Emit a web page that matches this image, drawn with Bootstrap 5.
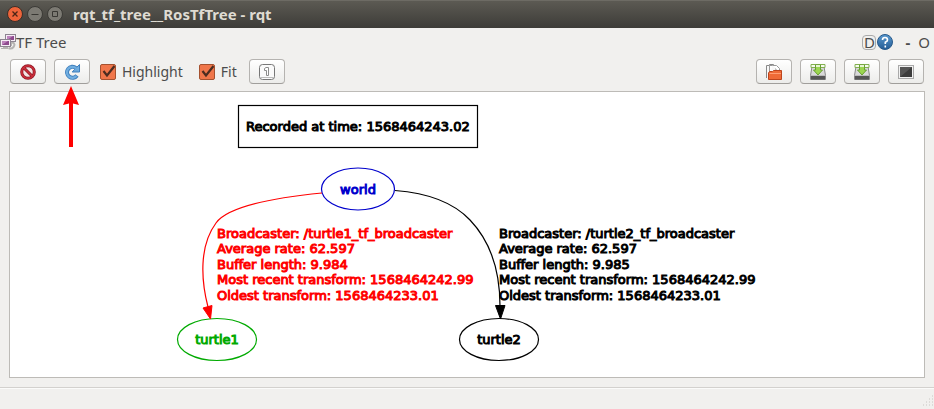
<!DOCTYPE html>
<html lang="en">
<head>
<meta charset="utf-8">
<meta name="viewport" content="width=device-width, initial-scale=1">
<title>rqt_tf_tree__RosTfTree - rqt</title>
<link rel="stylesheet" href="https://cdn.jsdelivr.net/npm/bootstrap@5.3.0/dist/css/bootstrap.min.css">
<style>
body { background: #f1f0ee; color: #4c4c4c; font: 14px/20px "Noto Sans", "Open Sans", sans-serif; }
.title-bar { height: 28px; background: linear-gradient(#5d5b54, #3d3c38); box-shadow: inset 0 1px #6d6b64; padding-left: 7px; }
.title-bar h1 { font-size: 15px; line-height: 20px; color: #dfdbd2; padding-left: 2px; }
.win-btn { width: 16px; height: 16px; }
.win-btn svg, .tool svg, .dock-bar svg { display: block; }
.dock-bar { height: 28px; font-size: 15px; }
.dock-btn { color: #4c4c4c; line-height: 16px; font-size: 15px; }
.dock-d { width: 14px; height: 15px; border: 1px solid #aaa; border-radius: 4px; line-height: 13px; margin-right: 1px; }
.tools { padding: 3px 10px 7px; min-height: 35px; }
.tool { width: 36px; height: 25px; border: 1px solid #b5b3b0; border-bottom-color: #a09e9b; border-radius: 4px; background: linear-gradient(#fff, #ececea); }
.tick { width: 16px; height: 16px; margin: 0 6px 0 0; float: none; }
.tick, .tick:checked { border: 1px solid #a5512f; border-radius: 2px; }
.tick:checked { background: #f0764a url("data:image/svg+xml,%3Csvg xmlns='http://www.w3.org/2000/svg' viewBox='0 0 14 14'%3E%3Cpath d='M2.5 6L6 10.5L13.500 1' fill='none' stroke='%234d2c20' stroke-width='2.2'/%3E%3C/svg%3E") center / 14px 14px no-repeat; }
.first-check { margin-left: 2px; }
.pointer { position: absolute; left: 8px; top: 26px; z-index: 2; pointer-events: none; }
.graph-view { margin: 0 9px; border: 1px solid #bdbbb7; background: #fff; }
.graph-view svg { display: block; max-width: 100%; }
.graph-view text { font: 13px "DejaVu Sans", sans-serif; fill: currentColor; stroke: currentColor; stroke-width: 1px; }
.red { color: #f00; } .blue { color: #00c; } .green { color: #0a0; } .black { color: #000; }
.status { height: 22px; margin-top: 9px; border-top: 1px solid #d3d1ce; box-shadow: inset 0 1px #fbfbfa; }
</style>
<script src="https://cdn.jsdelivr.net/npm/bootstrap@5.3.0/dist/js/bootstrap.bundle.min.js"></script>
</head>
<body class="d-flex flex-column min-vh-100 m-0">

<header class="title-bar d-flex align-items-center">
  <div class="d-flex gap-1 me-2">
    <button class="win-btn btn p-0 border-0" aria-label="Close"><svg width="16" height="16"><circle cx="8" cy="8" r="7.5" fill="#ee643a" stroke="#3a2e28"/><path d="M5.5 5.5l5 5m0-5l-5 5" stroke="#4a2416" stroke-width="1.3"/></svg></button>
    <button class="win-btn btn p-0 border-0" aria-label="Minimize"><svg width="16" height="16"><circle cx="8" cy="8" r="7.5" fill="#7c7a73" stroke="#3b3a36"/><path d="M4.5 8.5h7" stroke="#383733"/></svg></button>
    <button class="win-btn btn p-0 border-0" aria-label="Maximize"><svg width="16" height="16"><circle cx="8" cy="8" r="7.5" fill="#7c7a73" stroke="#3b3a36"/><path d="M5.5 5.5h5v5h-5z" fill="none" stroke="#383733"/></svg></button>
  </div>
  <h1 class="fw-bold m-0">rqt_tf_tree__RosTfTree - rqt</h1>
</header>

<div class="dock-bar d-flex align-items-center">
  <svg width="16" height="16" aria-hidden="true"><path d="M3 13.5h5M11 8v4M12 8q4 2 1.500 5q-2 2.500-5 1" fill="none" stroke="#b5b3b1" stroke-width="2"/><rect x="5.5" y=".5" width="10" height="7" fill="#f5ecf5" stroke="#8d8490"/><rect x="7" y="2" width="7" height="4" fill="#8e4a8e"/><path d="M7 6l6-4H7z" fill="#bd83bc"/><rect x=".5" y="5.5" width="10" height="7" fill="#f5ecf5" stroke="#8d8490"/><rect x="2" y="7" width="7" height="4" fill="#8e4a8e"/><path d="M2 11l6-4H2z" fill="#bd83bc"/><path d="M1 14.5h7" stroke="#b5b3b1"/></svg>
  <span>TF Tree</span>
  <div class="d-flex align-items-center ms-auto me-1">
    <button class="dock-btn dock-d bg-transparent p-0 d-flex justify-content-center" aria-label="Dock">D</button>
    <button class="btn p-0 border-0" aria-label="Help"><svg width="16" height="16"><defs><linearGradient id="help" x2="0" y2="1"><stop stop-color="#5c9bd0"/><stop offset="1" stop-color="#235b94"/></linearGradient></defs><circle cx="8" cy="8" r="7.5" fill="url(#help)" stroke="#285a8b"/><path d="M5.5 6Q5.5 3.500 8 3.500T10.500 6Q10.500 7.300 8.300 8.300V10M8.300 11.500v2" fill="none" stroke="#fff" stroke-width="1.600"/></svg></button>
    <button class="dock-btn btn p-0 border-0 ms-2 px-1 fw-bold" aria-label="Minimize dock">-</button>
    <button class="dock-btn btn p-0 border-0 ps-1" aria-label="Float dock">O</button>
  </div>
</div>

<div class="tools d-flex align-items-center gap-2" role="toolbar" aria-label="Graph tools">
  <button class="tool btn p-0 d-flex align-items-center justify-content-center" aria-label="Clear"><svg width="16" height="16"><circle cx="8" cy="8" r="6.300" fill="#f3e4e4" stroke="#8f1724" stroke-width="3"/><path d="M3.500 3.500l9 9" stroke="#8f1724" stroke-width="3"/><circle cx="8" cy="8" r="6.300" fill="none" stroke="#cb2f3b" stroke-width="1.600"/><path d="M3.500 3.500l9 9" stroke="#cb2f3b" stroke-width="1.600"/></svg></button>
  <div class="position-relative">
    <button class="tool btn p-0 d-flex align-items-center justify-content-center" aria-label="Refresh"><svg width="16" height="16"><path d="M13 11.500A5.500 5.500 0 1 1 12 4" fill="none" stroke="#3f7fbd" stroke-width="4"/><path d="M15.500 .5V8H8.200L10.500 5.500z" fill="#6aa8dc" stroke="#3f7fbd"/><path d="M12.500 12A5.500 5.500 0 1 1 12.200 4.300" fill="none" stroke="#70aee0" stroke-width="2.200"/><path d="M12 5l3-3v5.500z" fill="#70aee0"/></svg></button>
    <svg class="pointer" width="18" height="62" aria-hidden="true"><path d="M9 1L17 20L11 18.500V62H7V18.500L1 20z" fill="#f00"/></svg>
  </div>
  <div class="first-check d-flex align-items-center"><input class="form-check-input tick" type="checkbox" id="highlight" checked><label for="highlight">Highlight</label></div>
  <div class="d-flex align-items-center ms-2"><input class="form-check-input tick" type="checkbox" id="fit" checked><label for="fit">Fit</label></div>
  <button class="tool btn p-0 d-flex align-items-center justify-content-center ms-1" aria-label="Fit in view"><svg width="16" height="16"><rect x=".5" y=".5" width="15" height="15" rx="3" fill="#fafafa" stroke="#777"/><path d="M1.500 13.500h13" stroke="#bbb"/><path d="M5.500 4.500L7 3.500H9.500V11.500H7.500V6.500H5.500z" fill="#fff" stroke="#8b8b8b"/></svg></button>
  <div class="d-flex gap-2 ms-auto">
    <button class="tool btn p-0 d-flex align-items-center justify-content-center" aria-label="Load DOT graph"><svg width="16" height="16"><path d="M.5 14V1.500h3V.5h4l2.500 2.500V8" fill="#f8f8f8" stroke="#888"/><path d="M3.500 12V1.500h3M6.500 1.500h4l3 3V8" fill="#fff" stroke="#999"/><path d="M2.500 15.500V9l1-1.500h3l1-1h8v9z" fill="#ef6a36" stroke="#bd451d"/><path d="M3.500 9.500h11.500" stroke="#ff9d72"/></svg></button>
    <button class="tool btn p-0 d-flex align-items-center justify-content-center" aria-label="Save as DOT"><svg width="16" height="16"><use href="#save-icon"/></svg></button>
    <button class="tool btn p-0 d-flex align-items-center justify-content-center" aria-label="Save as SVG"><svg width="16" height="16"><use href="#save-icon"/></svg></button>
    <button class="tool btn p-0 d-flex align-items-center justify-content-center" aria-label="Save as image"><svg width="16" height="14"><rect x=".5" y=".5" width="15" height="13" fill="#f1f1f1" stroke="#aaa"/><rect x="2" y="2" width="12" height="10" fill="#3c3c3c"/><path d="M2 12V2h12z" fill="#555"/></svg></button>
  </div>
</div>

<main class="graph-view flex-grow-1 d-flex justify-content-center align-items-center">
  <svg width="582" height="285" viewBox="176 92 582 285" role="img" aria-label="Transform tree">
    <g fill="none" stroke-width="1.200">
      <rect x="238.500" y="105.500" width="239" height="42" stroke="#000"/>
      <ellipse cx="358" cy="189" rx="36.500" ry="21" stroke="#00c"/>
      <ellipse cx="217" cy="339.500" rx="39.500" ry="21" stroke="#0a0"/>
      <ellipse cx="499" cy="339.500" rx="39.500" ry="21" stroke="#000"/>
      <path d="M322 193C282 197 229 205 216 223C199 246 201 280 208 307" stroke="#f00"/>
      <path d="M395 190.500C428 193 454 203 470 220C491 242 500 270 500 306" stroke="#000"/>
    </g>
    <path d="M203 308L212 305.500L210.500 319z" fill="#f00" stroke="#f00"/>
    <path d="M495.500 305.500H505L500.500 319z" stroke="#000"/>
    <g class="black"><text x="246" y="131">Recorded at time: 1568464243.02</text></g>
    <g text-anchor="middle">
      <text class="blue" x="358" y="194">world</text>
      <text class="green" x="217" y="344">turtle1</text>
      <text class="black" x="499" y="344">turtle2</text>
    </g>
    <g class="red">
      <text x="217" y="238">Broadcaster: /turtle1_tf_broadcaster</text>
      <text x="217" y="253">Average rate: 62.597</text>
      <text x="217" y="269">Buffer length: 9.984</text>
      <text x="217" y="284">Most recent transform: 1568464242.99</text>
      <text x="217" y="300">Oldest transform: 1568464233.01</text>
    </g>
    <g class="black">
      <text x="499" y="238">Broadcaster: /turtle2_tf_broadcaster</text>
      <text x="499" y="253">Average rate: 62.597</text>
      <text x="499" y="269">Buffer length: 9.985</text>
      <text x="499" y="284">Most recent transform: 1568464242.99</text>
      <text x="499" y="300">Oldest transform: 1568464233.01</text>
    </g>
  </svg>
</main>

<footer class="status d-flex justify-content-end align-items-end">
  <svg width="12" height="14" aria-hidden="true"><path d="M10 1h1M7 4h1M10 4h1M4 7h1M7 7h1M10 7h1M1 10h1M4 10h1M7 10h1M10 10h1" stroke="#c8c6c2"/></svg>
</footer>

<svg width="0" height="0" class="position-absolute" aria-hidden="true">
  <symbol id="save-icon" viewBox="0 0 16 16"><path d="M2 2.500h12l1.500 9v4H.5v-4z" fill="#d9d9d9" stroke="#888"/><path d="M1 12h14v3.500H1z" fill="#555"/><path d="M1 11.500h14" stroke="#bbb"/><path d="M1 .5h14v3H1z" fill="#f6fbef" stroke="#82b050"/><path d="M5.500 1V6H3.500L8 11l4.500-5H10.500V1z" fill="#9bd650" stroke="#6a9e34"/><path d="M6 1h4v2H6z" fill="#e6f5d2"/></symbol>
</svg>
</body>
</html>
